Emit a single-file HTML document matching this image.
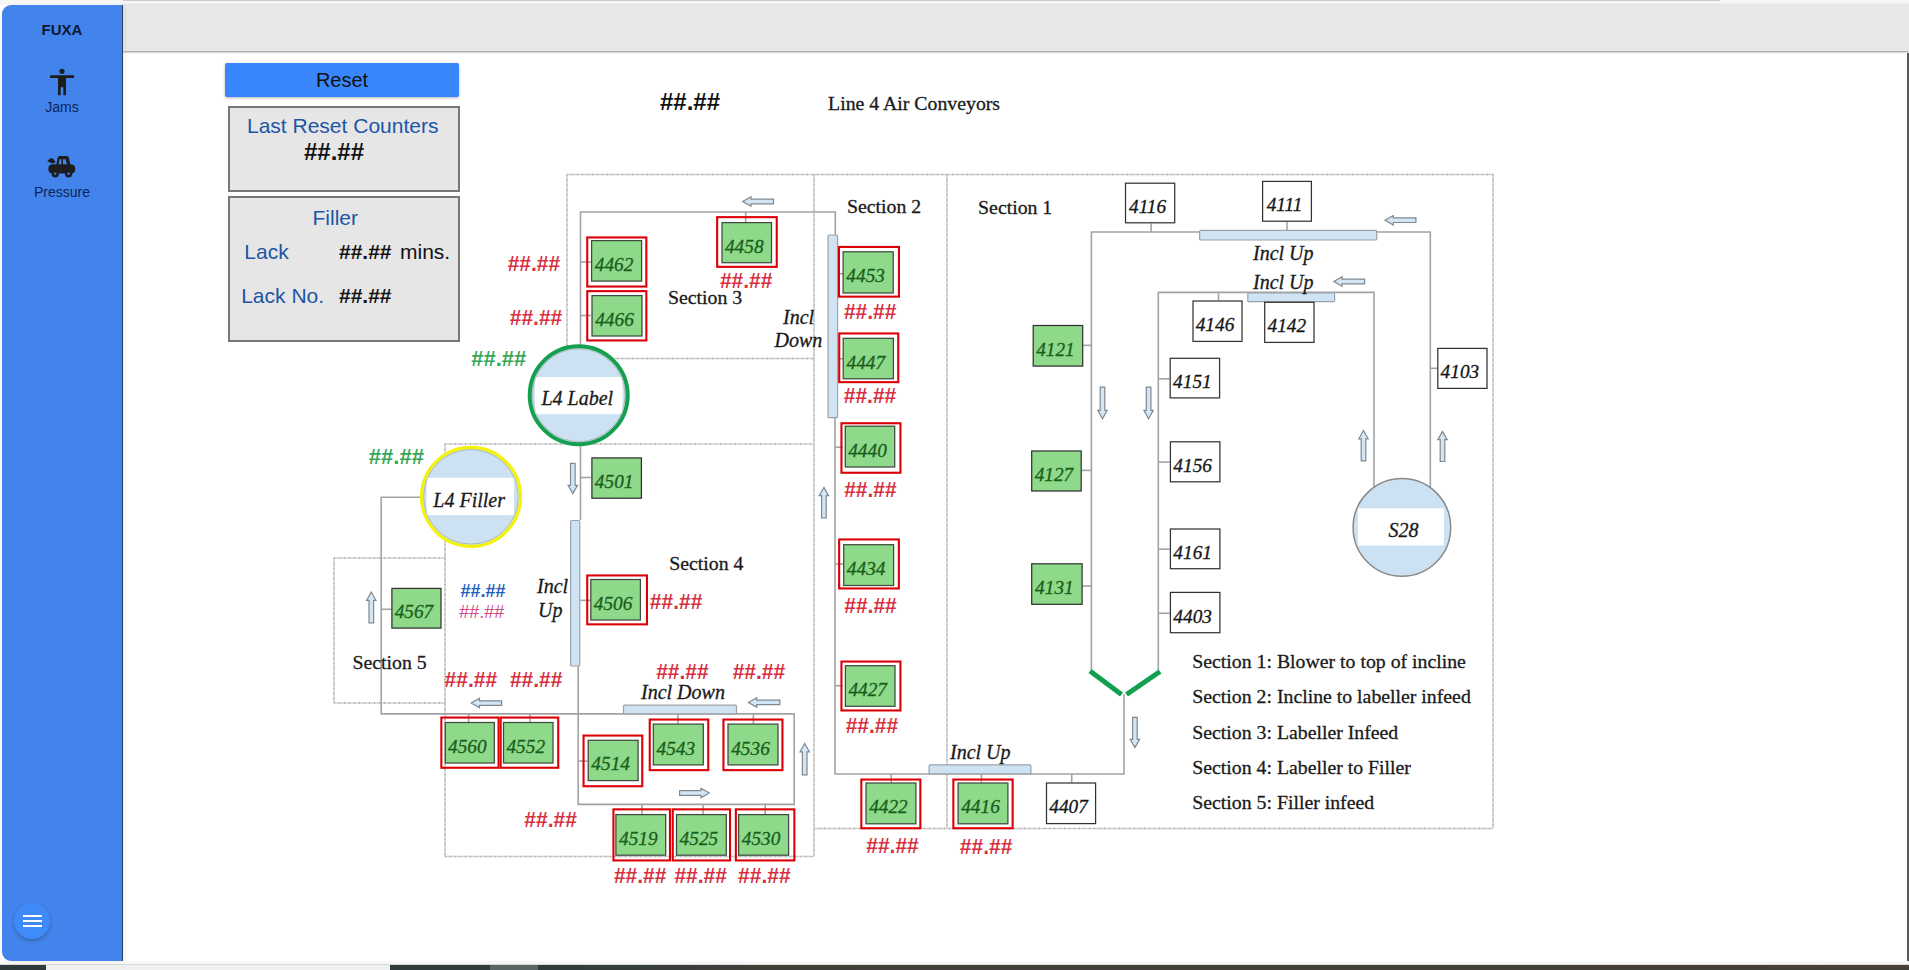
<!DOCTYPE html>
<html><head><meta charset="utf-8"><title>FUXA</title>
<style>
html,body{margin:0;padding:0;}
body{width:1909px;height:970px;position:relative;overflow:hidden;background:#ffffff;font-family:"Liberation Sans",sans-serif;}
.abs{position:absolute;}
#topstrip{left:0;top:0;width:1909px;height:5px;background:#f6f6f6;}
#topline{left:123px;top:0;width:1597px;height:1px;background:#c9c9c9;}
#header{left:123px;top:4px;width:1786px;height:47px;background:#e6e7e9;box-shadow:0 1px 2px rgba(0,0,0,0.45);}
#sidebar{left:2px;top:5px;width:120px;height:956px;background:#4384ec;border-radius:9px 0 0 9px;border-right:1px solid #2a3f66;box-shadow:2px 0 4px rgba(0,0,0,0.06);}
.navt{position:absolute;left:0;width:120px;text-align:center;color:#0c2459;}
#fuxa{color:#0d1a33;}
#fuxa{top:15px;font-weight:bold;font-size:15px;line-height:20px;}
.lbl{font-size:14px;line-height:16px;}
#fab{left:14px;top:903px;width:36px;height:36px;border-radius:50%;background:#3f8bf8;box-shadow:0 2px 4px rgba(0,0,0,0.25);}
#bottomstrip{left:0;top:961px;width:1909px;height:4px;background:#f7f7f7;border-bottom:1px solid #d9d9d9;box-sizing:border-box;}
#taskbar{left:0;top:965px;width:1909px;height:5px;background:linear-gradient(to right,#2f3c3c 0px,#2f3c3c 560px,#413f3a 760px,#454039 1909px);}
#rightedge{left:1907px;top:53px;width:2px;height:908px;background:#5a5a5a;}
#reset{left:225px;top:63px;width:234px;height:34px;background:#3a86fc;border-radius:2px;box-shadow:0 1px 3px rgba(0,0,0,0.3);text-align:center;font-size:20px;line-height:34px;color:#111;}
.panel{background:#e6e6e6;border:2px solid #777;box-sizing:border-box;}
#p1{left:228px;top:106px;width:232px;height:86px;}
#p2{left:228px;top:196px;width:232px;height:146px;}
.pt{position:absolute;font-size:21px;line-height:24px;color:#1d55a6;white-space:nowrap;}
.pv{position:absolute;font-size:21px;line-height:24px;color:#111;white-space:nowrap;}
.b{font-weight:bold;}
svg text.sr{font-family:"Liberation Serif",serif;font-size:19.8px;fill:#1a1a1a;stroke:#1a1a1a;stroke-width:0.3px;}
svg text.si{font-family:"Liberation Serif",serif;font-style:italic;font-size:20px;fill:#1a1a1a;stroke:#1a1a1a;stroke-width:0.3px;}
svg text.bg{font-family:"Liberation Serif",serif;font-style:italic;font-size:19.3px;fill:#185e1a;stroke:#185e1a;stroke-width:0.3px;}
svg text.bb{font-family:"Liberation Serif",serif;font-style:italic;font-size:19.3px;fill:#151515;stroke:#151515;stroke-width:0.3px;}
svg text.v{font-family:"Liberation Sans",sans-serif;font-weight:bold;}
svg text.vn{font-family:"Liberation Sans",sans-serif;}
</style></head><body>
<div id="topstrip" class="abs"></div>
<div id="topline" class="abs"></div>
<div id="header" class="abs"></div>
<div id="bottomstrip" class="abs"></div>
<div id="taskbar" class="abs"></div>
<div class="abs" style="left:0;top:965px;width:46px;height:5px;background:#2f3b3b"></div>
<div class="abs" style="left:46px;top:965px;width:344px;height:5px;background:#efefef"></div>
<div class="abs" style="left:390px;top:965px;width:100px;height:5px;background:#2f3c3c"></div>
<div class="abs" style="left:490px;top:965px;width:48px;height:5px;background:#5b6666"></div>
<div id="rightedge" class="abs"></div>
<div id="sidebar" class="abs">
  <div id="fuxa" class="navt">FUXA</div>
  <svg class="abs" style="left:44px;top:61px" width="32" height="32" viewBox="0 0 24 24"><path fill="#1d1d1d" d="M12 2c1.1 0 2 .9 2 2s-.9 2-2 2-2-.9-2-2 .9-2 2-2zm9 7h-6v13h-2v-6h-2v6H9V9H3V7h18v2z"/></svg>
  <div class="navt lbl" style="top:94px">Jams</div>
  <svg class="abs" style="left:0;top:0" width="120" height="200" viewBox="2 5 120 200"><g fill="#1d1d1d">
<path d="M56.2 165.2 L57.6 157.9 Q58 156 60 156 L66.6 156 Q68.6 156 69 157.9 L70.4 165.2 Z"/>
<path d="M52.5 164.3 L71 164.3 Q75.3 164.6 75.3 168.8 Q75.3 173.4 71 173.6 L53 173.6 Q48.3 173.4 48.3 168.9 Q48.3 164.6 52.5 164.3 Z"/>
<circle cx="55.2" cy="173.8" r="3.7"/><circle cx="68.6" cy="173.8" r="3.7"/>
<path d="M47.2 161.2 L50.2 158.2 L53.2 158.4 L55.6 162.6 L52.2 163.4 Z"/>
</g>
<path fill="#4384ec" d="M58.6 164.3 L59.6 159.3 L61.4 159.3 L61.4 164.3 Z M63 159.3 L65.6 159.3 L66.9 164.3 L63 164.3 Z"/>
<circle cx="55.2" cy="173.6" r="1.2" fill="#4384ec"/><circle cx="68.6" cy="173.6" r="1.2" fill="#4384ec"/></svg>
  <div class="navt lbl" style="top:179px">Pressure</div>
</div>
<div id="fab" class="abs"><div class="abs" style="left:8.5px;top:12px;width:19px;height:2px;background:#fff"></div><div class="abs" style="left:8.5px;top:17px;width:19px;height:2px;background:#fff"></div><div class="abs" style="left:8.5px;top:22px;width:19px;height:2px;background:#fff"></div></div>
<div id="reset" class="abs">Reset</div>
<div id="p1" class="abs panel">
  <div class="pt" style="left:17px;top:6px">Last Reset Counters</div>
  <div class="pv b" style="left:74px;top:31px;font-size:24px;line-height:26px">##.##</div>
</div>
<div id="p2" class="abs panel">
  <div class="pt" style="left:82.5px;top:7.5px">Filler</div>
  <div class="pt" style="left:14.3px;top:42px">Lack</div>
  <div class="pv b" style="left:109px;top:42px">##.##</div>
  <div class="pv" style="left:170px;top:42px">mins.</div>
  <div class="pt" style="left:11.2px;top:86px">Lack No.</div>
  <div class="pv b" style="left:109px;top:86px">##.##</div>
</div>
<div class="pv abs b" style="left:660px;top:89px;font-size:24px;line-height:26px">##.##</div>
<svg class="abs" style="left:0;top:0" width="1909" height="970" viewBox="0 0 1909 970">
<line x1="567" y1="174.5" x2="1493" y2="174.5" stroke="#d0d0d0" stroke-width="1.6" fill="none"/>
<line x1="567" y1="174.5" x2="1493" y2="174.5" stroke="#a8a8a8" stroke-width="1.4" stroke-dasharray="1 4" fill="none"/>
<line x1="567" y1="174.5" x2="567" y2="358.5" stroke="#d0d0d0" stroke-width="1.6" fill="none"/>
<line x1="567" y1="174.5" x2="567" y2="358.5" stroke="#a8a8a8" stroke-width="1.4" stroke-dasharray="1 4" fill="none"/>
<line x1="567" y1="358.5" x2="814" y2="358.5" stroke="#d0d0d0" stroke-width="1.6" fill="none"/>
<line x1="567" y1="358.5" x2="814" y2="358.5" stroke="#a8a8a8" stroke-width="1.4" stroke-dasharray="1 4" fill="none"/>
<line x1="814" y1="174.5" x2="814" y2="856.5" stroke="#d0d0d0" stroke-width="1.6" fill="none"/>
<line x1="814" y1="174.5" x2="814" y2="856.5" stroke="#a8a8a8" stroke-width="1.4" stroke-dasharray="1 4" fill="none"/>
<line x1="947" y1="174.5" x2="947" y2="828.5" stroke="#d0d0d0" stroke-width="1.6" fill="none"/>
<line x1="947" y1="174.5" x2="947" y2="828.5" stroke="#a8a8a8" stroke-width="1.4" stroke-dasharray="1 4" fill="none"/>
<line x1="1493" y1="174.5" x2="1493" y2="828.5" stroke="#d0d0d0" stroke-width="1.6" fill="none"/>
<line x1="1493" y1="174.5" x2="1493" y2="828.5" stroke="#a8a8a8" stroke-width="1.4" stroke-dasharray="1 4" fill="none"/>
<line x1="814" y1="828.5" x2="1493" y2="828.5" stroke="#d0d0d0" stroke-width="1.6" fill="none"/>
<line x1="814" y1="828.5" x2="1493" y2="828.5" stroke="#a8a8a8" stroke-width="1.4" stroke-dasharray="1 4" fill="none"/>
<line x1="445" y1="444" x2="814" y2="444" stroke="#d0d0d0" stroke-width="1.6" fill="none"/>
<line x1="445" y1="444" x2="814" y2="444" stroke="#a8a8a8" stroke-width="1.4" stroke-dasharray="1 4" fill="none"/>
<line x1="445" y1="444" x2="445" y2="856.5" stroke="#d0d0d0" stroke-width="1.6" fill="none"/>
<line x1="445" y1="444" x2="445" y2="856.5" stroke="#a8a8a8" stroke-width="1.4" stroke-dasharray="1 4" fill="none"/>
<line x1="445" y1="856.5" x2="814" y2="856.5" stroke="#d0d0d0" stroke-width="1.6" fill="none"/>
<line x1="445" y1="856.5" x2="814" y2="856.5" stroke="#a8a8a8" stroke-width="1.4" stroke-dasharray="1 4" fill="none"/>
<line x1="334" y1="558" x2="445" y2="558" stroke="#d0d0d0" stroke-width="1.6" fill="none"/>
<line x1="334" y1="558" x2="445" y2="558" stroke="#a8a8a8" stroke-width="1.4" stroke-dasharray="1 4" fill="none"/>
<line x1="334" y1="558" x2="334" y2="703" stroke="#d0d0d0" stroke-width="1.6" fill="none"/>
<line x1="334" y1="558" x2="334" y2="703" stroke="#a8a8a8" stroke-width="1.4" stroke-dasharray="1 4" fill="none"/>
<line x1="334" y1="703" x2="445" y2="703" stroke="#d0d0d0" stroke-width="1.6" fill="none"/>
<line x1="334" y1="703" x2="445" y2="703" stroke="#a8a8a8" stroke-width="1.4" stroke-dasharray="1 4" fill="none"/>
<polyline points="580.5,520 580.5,212 835.3,212 835.3,236" stroke="#a3a3a3" stroke-width="1.6" fill="none"/>
<polyline points="580.5,262 591,262" stroke="#a3a3a3" stroke-width="1.6" fill="none"/>
<polyline points="580.5,315.5 591,315.5" stroke="#a3a3a3" stroke-width="1.6" fill="none"/>
<polyline points="580.5,477.5 591,477.5" stroke="#a3a3a3" stroke-width="1.6" fill="none"/>
<polyline points="580.5,600.4 591,600.4" stroke="#a3a3a3" stroke-width="1.6" fill="none"/>
<polyline points="745.7,212 745.7,222" stroke="#a3a3a3" stroke-width="1.6" fill="none"/>
<polyline points="835,417 835,774 1124,774 1124,694" stroke="#a3a3a3" stroke-width="1.6" fill="none"/>
<polyline points="835,273.7 843,273.7" stroke="#a3a3a3" stroke-width="1.6" fill="none"/>
<polyline points="835,358.8 843,358.8" stroke="#a3a3a3" stroke-width="1.6" fill="none"/>
<polyline points="835,447.2 843,447.2" stroke="#a3a3a3" stroke-width="1.6" fill="none"/>
<polyline points="835,563.9 843,563.9" stroke="#a3a3a3" stroke-width="1.6" fill="none"/>
<polyline points="835,685.7 843,685.7" stroke="#a3a3a3" stroke-width="1.6" fill="none"/>
<polyline points="891.2,774 891.2,782.4" stroke="#a3a3a3" stroke-width="1.6" fill="none"/>
<polyline points="981.4,774 981.4,782.4" stroke="#a3a3a3" stroke-width="1.6" fill="none"/>
<polyline points="1071.7,774 1071.7,782.4" stroke="#a3a3a3" stroke-width="1.6" fill="none"/>
<polyline points="1091.4,670 1091.4,232 1430.3,232 1430.3,487" stroke="#a3a3a3" stroke-width="1.6" fill="none"/>
<polyline points="1151.1,223.4 1151.1,232" stroke="#a3a3a3" stroke-width="1.6" fill="none"/>
<polyline points="1287,221.8 1287,232" stroke="#a3a3a3" stroke-width="1.6" fill="none"/>
<polyline points="1083.3,345.4 1091.4,345.4" stroke="#a3a3a3" stroke-width="1.6" fill="none"/>
<polyline points="1081.8,470.4 1091.4,470.4" stroke="#a3a3a3" stroke-width="1.6" fill="none"/>
<polyline points="1082.7,586 1091.4,586" stroke="#a3a3a3" stroke-width="1.6" fill="none"/>
<polyline points="1430.3,368.3 1437.2,368.3" stroke="#a3a3a3" stroke-width="1.6" fill="none"/>
<polyline points="1158.3,670 1158.3,292.4 1374,292.4 1374,487" stroke="#a3a3a3" stroke-width="1.6" fill="none"/>
<polyline points="1218.5,292.4 1218.5,300.4" stroke="#a3a3a3" stroke-width="1.6" fill="none"/>
<polyline points="1158.3,378.8 1169.7,378.8" stroke="#a3a3a3" stroke-width="1.6" fill="none"/>
<polyline points="1158.3,462.1 1169.7,462.1" stroke="#a3a3a3" stroke-width="1.6" fill="none"/>
<polyline points="1158.3,549.2 1169.7,549.2" stroke="#a3a3a3" stroke-width="1.6" fill="none"/>
<polyline points="1158.3,613.3 1169.7,613.3" stroke="#a3a3a3" stroke-width="1.6" fill="none"/>
<polyline points="420,497.2 381.2,497.2 381.2,713.9 794.2,713.9 794.2,804.4 578.2,804.4 578.2,666" stroke="#a3a3a3" stroke-width="1.6" fill="none"/>
<polyline points="381.2,609.3 391.3,609.3" stroke="#a3a3a3" stroke-width="1.6" fill="none"/>
<polyline points="468.6,713.9 468.6,722" stroke="#a3a3a3" stroke-width="1.6" fill="none"/>
<polyline points="530,713.9 530,722" stroke="#a3a3a3" stroke-width="1.6" fill="none"/>
<polyline points="677.9,713.9 677.9,723.5" stroke="#a3a3a3" stroke-width="1.6" fill="none"/>
<polyline points="753.4,713.9 753.4,723.5" stroke="#a3a3a3" stroke-width="1.6" fill="none"/>
<polyline points="578.2,761.1 587.6,761.1" stroke="#a3a3a3" stroke-width="1.6" fill="none"/>
<polyline points="642,804.4 642,814" stroke="#a3a3a3" stroke-width="1.6" fill="none"/>
<polyline points="703.1,804.4 703.1,814" stroke="#a3a3a3" stroke-width="1.6" fill="none"/>
<polyline points="765.2,804.4 765.2,814" stroke="#a3a3a3" stroke-width="1.6" fill="none"/>
<polyline points="1090,671 1121.5,694.5" stroke="#10a050" stroke-width="5" fill="none"/>
<polyline points="1126.5,694.5 1160,671.5" stroke="#10a050" stroke-width="5" fill="none"/>
<rect x="828" y="235" width="9.6" height="182.7" rx="1" fill="#cfe3f2" stroke="#9aa3ab" stroke-width="1.2"/>
<rect x="570.6" y="520.5" width="9.2" height="145.5" rx="1" fill="#cfe3f2" stroke="#9aa3ab" stroke-width="1.2"/>
<rect x="623.5" y="705.2" width="113" height="8.6" rx="1" fill="#cfe3f2" stroke="#9aa3ab" stroke-width="1.2"/>
<rect x="929.1" y="764.9" width="101.8" height="9" rx="1" fill="#cfe3f2" stroke="#9aa3ab" stroke-width="1.2"/>
<rect x="1199.6" y="230.4" width="177.1" height="9.6" rx="1" fill="#cfe3f2" stroke="#9aa3ab" stroke-width="1.2"/>
<rect x="1247.8" y="293" width="86.8" height="8.7" rx="1" fill="#cfe3f2" stroke="#9aa3ab" stroke-width="1.2"/>
<polygon points="742.7,201.5 751,196.8 751,199.2 773.5,199.2 773.5,203.8 751,203.8 751,206.2" fill="#d2e6f5" stroke="#7f878f" stroke-width="1.2"/>
<polygon points="1385,220.2 1393.3,215.5 1393.3,217.9 1415.9,217.9 1415.9,222.5 1393.3,222.5 1393.3,224.9" fill="#d2e6f5" stroke="#7f878f" stroke-width="1.2"/>
<polygon points="1333.8,281.5 1342.1,276.8 1342.1,279.2 1364.6,279.2 1364.6,283.8 1342.1,283.8 1342.1,286.2" fill="#d2e6f5" stroke="#7f878f" stroke-width="1.2"/>
<polygon points="471.2,703.1 479.5,698.4 479.5,700.8 501.6,700.8 501.6,705.4 479.5,705.4 479.5,707.8" fill="#d2e6f5" stroke="#7f878f" stroke-width="1.2"/>
<polygon points="748.4,702.4 756.7,697.7 756.7,700.1 779.8,700.1 779.8,704.7 756.7,704.7 756.7,707.1" fill="#d2e6f5" stroke="#7f878f" stroke-width="1.2"/>
<polygon points="709.3,793 701,788.3 701,790.7 679.6,790.7 679.6,795.3 701,795.3 701,797.7" fill="#d2e6f5" stroke="#7f878f" stroke-width="1.2"/>
<polygon points="572.8,493.6 577.5,485.3 575.1,485.3 575.1,463.3 570.5,463.3 570.5,485.3 568.1,485.3" fill="#d2e6f5" stroke="#7f878f" stroke-width="1.2"/>
<polygon points="1102.5,418.7 1107.2,410.4 1104.8,410.4 1104.8,387.2 1100.2,387.2 1100.2,410.4 1097.8,410.4" fill="#d2e6f5" stroke="#7f878f" stroke-width="1.2"/>
<polygon points="1148.6,418.7 1153.3,410.4 1150.9,410.4 1150.9,387.2 1146.3,387.2 1146.3,410.4 1143.9,410.4" fill="#d2e6f5" stroke="#7f878f" stroke-width="1.2"/>
<polygon points="1134.9,747.6 1139.6,739.3 1137.2,739.3 1137.2,717.4 1132.6,717.4 1132.6,739.3 1130.2,739.3" fill="#d2e6f5" stroke="#7f878f" stroke-width="1.2"/>
<polygon points="371.3,592 376,600.3 373.6,600.3 373.6,622.8 369,622.8 369,600.3 366.6,600.3" fill="#d2e6f5" stroke="#7f878f" stroke-width="1.2"/>
<polygon points="823.9,487.4 828.6,495.7 826.2,495.7 826.2,518 821.6,518 821.6,495.7 819.2,495.7" fill="#d2e6f5" stroke="#7f878f" stroke-width="1.2"/>
<polygon points="804.7,743.5 809.4,751.8 807,751.8 807,774.9 802.4,774.9 802.4,751.8 800,751.8" fill="#d2e6f5" stroke="#7f878f" stroke-width="1.2"/>
<polygon points="1363.5,430.5 1368.2,438.8 1365.8,438.8 1365.8,460.9 1361.2,460.9 1361.2,438.8 1358.8,438.8" fill="#d2e6f5" stroke="#7f878f" stroke-width="1.2"/>
<polygon points="1442.5,431.4 1447.2,439.7 1444.8,439.7 1444.8,461.5 1440.2,461.5 1440.2,439.7 1437.8,439.7" fill="#d2e6f5" stroke="#7f878f" stroke-width="1.2"/>
<clipPath id="c578"><circle cx="578.7" cy="395.2" r="49"/></clipPath>
<circle cx="578.7" cy="395.2" r="49" fill="#cce2f3"/>
<rect x="534.9" y="377" width="87.7" height="37.2" fill="#ffffff" clip-path="url(#c578)"/>
<circle cx="578.7" cy="395.2" r="46.4" fill="none" stroke="#8a8f80" stroke-width="0.7" opacity="0.7"/>
<circle cx="578.7" cy="395.2" r="49" fill="none" stroke="#14a050" stroke-width="4"/>
<text x="541.5" y="404.7" class="si">L4 Label</text>
<clipPath id="c471"><circle cx="471" cy="496.8" r="49.5"/></clipPath>
<circle cx="471" cy="496.8" r="49.5" fill="#cce2f3"/>
<rect x="426.6" y="477.8" width="87.3" height="37.4" fill="#ffffff" clip-path="url(#c471)"/>
<circle cx="471" cy="496.8" r="47.3" fill="none" stroke="#8a8f80" stroke-width="0.7" opacity="0.7"/>
<circle cx="471" cy="496.8" r="49.5" fill="none" stroke="#f2f20c" stroke-width="3.2"/>
<text x="433.3" y="507" class="si">L4 Filler</text>
<clipPath id="c1401"><circle cx="1401.9" cy="527.4" r="48.8"/></clipPath>
<circle cx="1401.9" cy="527.4" r="48.8" fill="#cce2f3"/>
<rect x="1357.9" y="508.3" width="86" height="37.2" fill="#ffffff" clip-path="url(#c1401)"/>
<circle cx="1401.9" cy="527.4" r="48.8" fill="none" stroke="#8a8a8a" stroke-width="1.5"/>
<text x="1388.5" y="537.2" class="si">S28</text>
<rect x="591.6" y="240.6" width="50" height="40.5" fill="#8ed98a" stroke="#3f4a40" stroke-width="1.25"/>
<text x="614.1" y="270.85" text-anchor="middle" class="bg">4462</text>
<rect x="587.25" y="237.45" width="59.1" height="49.1" fill="none" stroke="#dc0006" stroke-width="2.1"/>
<rect x="592" y="295.6" width="50" height="40.4" fill="#8ed98a" stroke="#3f4a40" stroke-width="1.25"/>
<text x="614.5" y="325.8" text-anchor="middle" class="bg">4466</text>
<rect x="587.25" y="291.15" width="59.1" height="49.3" fill="none" stroke="#dc0006" stroke-width="2.1"/>
<rect x="722" y="222.6" width="49.5" height="40.1" fill="#8ed98a" stroke="#3f4a40" stroke-width="1.25"/>
<text x="744.25" y="252.65" text-anchor="middle" class="bg">4458</text>
<rect x="717.15" y="217.15" width="59.6" height="49.7" fill="none" stroke="#dc0006" stroke-width="2.1"/>
<rect x="843.1" y="251.8" width="50.1" height="41.2" fill="#8ed98a" stroke="#3f4a40" stroke-width="1.25"/>
<text x="865.65" y="282.4" text-anchor="middle" class="bg">4453</text>
<rect x="838.95" y="246.95" width="60" height="49.7" fill="none" stroke="#dc0006" stroke-width="2.1"/>
<rect x="843.2" y="338.3" width="50.2" height="40.5" fill="#8ed98a" stroke="#3f4a40" stroke-width="1.25"/>
<text x="865.8" y="368.55" text-anchor="middle" class="bg">4447</text>
<rect x="839.25" y="333.45" width="59" height="48.7" fill="none" stroke="#dc0006" stroke-width="2.1"/>
<rect x="845.3" y="426.2" width="49.4" height="40.8" fill="#8ed98a" stroke="#3f4a40" stroke-width="1.25"/>
<text x="867.5" y="456.6" text-anchor="middle" class="bg">4440</text>
<rect x="841.45" y="423.25" width="59" height="49.5" fill="none" stroke="#dc0006" stroke-width="2.1"/>
<rect x="843.7" y="544.7" width="49.9" height="40.8" fill="#8ed98a" stroke="#3f4a40" stroke-width="1.25"/>
<text x="866.15" y="575.1" text-anchor="middle" class="bg">4434</text>
<rect x="839.15" y="539.45" width="59.7" height="49" fill="none" stroke="#dc0006" stroke-width="2.1"/>
<rect x="845.4" y="665.7" width="49.6" height="40.6" fill="#8ed98a" stroke="#3f4a40" stroke-width="1.25"/>
<text x="867.7" y="696" text-anchor="middle" class="bg">4427</text>
<rect x="841.45" y="661.55" width="59" height="48.9" fill="none" stroke="#dc0006" stroke-width="2.1"/>
<rect x="866" y="783" width="49.9" height="40.8" fill="#8ed98a" stroke="#3f4a40" stroke-width="1.25"/>
<text x="888.45" y="813.4" text-anchor="middle" class="bg">4422</text>
<rect x="861.35" y="779.55" width="59" height="48.7" fill="none" stroke="#dc0006" stroke-width="2.1"/>
<rect x="958.1" y="783" width="49.8" height="40.8" fill="#8ed98a" stroke="#3f4a40" stroke-width="1.25"/>
<text x="980.5" y="813.4" text-anchor="middle" class="bg">4416</text>
<rect x="953.35" y="779.55" width="59.3" height="48.7" fill="none" stroke="#dc0006" stroke-width="2.1"/>
<rect x="590.8" y="579.5" width="49.6" height="40.5" fill="#8ed98a" stroke="#3f4a40" stroke-width="1.25"/>
<text x="613.1" y="609.75" text-anchor="middle" class="bg">4506</text>
<rect x="587.25" y="575.45" width="59.7" height="48.9" fill="none" stroke="#dc0006" stroke-width="2.1"/>
<rect x="445.3" y="722.5" width="49" height="40.5" fill="#8ed98a" stroke="#3f4a40" stroke-width="1.25"/>
<text x="467.3" y="752.75" text-anchor="middle" class="bg">4560</text>
<rect x="441.35" y="717.55" width="57.2" height="50.2" fill="none" stroke="#dc0006" stroke-width="2.1"/>
<rect x="503.5" y="722.5" width="49.5" height="40.5" fill="#8ed98a" stroke="#3f4a40" stroke-width="1.25"/>
<text x="525.75" y="752.75" text-anchor="middle" class="bg">4552</text>
<rect x="500.65" y="717.55" width="57.6" height="50.2" fill="none" stroke="#dc0006" stroke-width="2.1"/>
<rect x="588.2" y="740.3" width="49.9" height="40.3" fill="#8ed98a" stroke="#3f4a40" stroke-width="1.25"/>
<text x="610.65" y="770.45" text-anchor="middle" class="bg">4514</text>
<rect x="583.55" y="735.55" width="58.7" height="50.7" fill="none" stroke="#dc0006" stroke-width="2.1"/>
<rect x="653.3" y="724.1" width="50" height="40.8" fill="#8ed98a" stroke="#3f4a40" stroke-width="1.25"/>
<text x="675.8" y="754.5" text-anchor="middle" class="bg">4543</text>
<rect x="649.75" y="719.55" width="58.5" height="50.6" fill="none" stroke="#dc0006" stroke-width="2.1"/>
<rect x="728" y="724.1" width="50" height="40.8" fill="#8ed98a" stroke="#3f4a40" stroke-width="1.25"/>
<text x="750.5" y="754.5" text-anchor="middle" class="bg">4536</text>
<rect x="723.45" y="719.55" width="59" height="50.6" fill="none" stroke="#dc0006" stroke-width="2.1"/>
<rect x="615.9" y="814.6" width="49.8" height="40.6" fill="#8ed98a" stroke="#3f4a40" stroke-width="1.25"/>
<text x="638.3" y="844.9" text-anchor="middle" class="bg">4519</text>
<rect x="613.45" y="809.35" width="56.5" height="51.1" fill="none" stroke="#dc0006" stroke-width="2.1"/>
<rect x="676.5" y="814.6" width="49.8" height="40.6" fill="#8ed98a" stroke="#3f4a40" stroke-width="1.25"/>
<text x="698.9" y="844.9" text-anchor="middle" class="bg">4525</text>
<rect x="672.75" y="809.35" width="57.3" height="51.1" fill="none" stroke="#dc0006" stroke-width="2.1"/>
<rect x="738.6" y="814.6" width="50" height="40.6" fill="#8ed98a" stroke="#3f4a40" stroke-width="1.25"/>
<text x="761.1" y="844.9" text-anchor="middle" class="bg">4530</text>
<rect x="735.85" y="809.35" width="58.5" height="51.1" fill="none" stroke="#dc0006" stroke-width="2.1"/>
<rect x="591.9" y="457.9" width="49.5" height="40.3" fill="#8ed98a" stroke="#333" stroke-width="1.25"/>
<text x="614.15" y="488.05" text-anchor="middle" class="bg">4501</text>
<rect x="391.9" y="588.4" width="49.1" height="39.7" fill="#8ed98a" stroke="#333" stroke-width="1.25"/>
<text x="413.95" y="618.25" text-anchor="middle" class="bg">4567</text>
<rect x="1033.2" y="325.5" width="49.5" height="40.6" fill="#8ed98a" stroke="#333" stroke-width="1.25"/>
<text x="1055.45" y="355.8" text-anchor="middle" class="bg">4121</text>
<rect x="1031.7" y="451" width="49.5" height="40" fill="#8ed98a" stroke="#333" stroke-width="1.25"/>
<text x="1053.95" y="481" text-anchor="middle" class="bg">4127</text>
<rect x="1031.7" y="563.8" width="50.4" height="40.5" fill="#8ed98a" stroke="#333" stroke-width="1.25"/>
<text x="1054.4" y="594.05" text-anchor="middle" class="bg">4131</text>
<rect x="1125.5" y="183.2" width="49.2" height="39.6" fill="#ffffff" stroke="#333" stroke-width="1.25"/>
<text x="1147.6" y="213" text-anchor="middle" class="bb">4116</text>
<rect x="1262.6" y="181.4" width="48.8" height="39.8" fill="#ffffff" stroke="#333" stroke-width="1.25"/>
<text x="1284.5" y="211.3" text-anchor="middle" class="bb">4111</text>
<rect x="1193" y="301" width="49" height="40.4" fill="#ffffff" stroke="#333" stroke-width="1.25"/>
<text x="1215" y="331.2" text-anchor="middle" class="bb">4146</text>
<rect x="1264.7" y="302.3" width="49.3" height="40.1" fill="#ffffff" stroke="#333" stroke-width="1.25"/>
<text x="1286.85" y="332.35" text-anchor="middle" class="bb">4142</text>
<rect x="1170.2" y="358.3" width="49.4" height="39.6" fill="#ffffff" stroke="#333" stroke-width="1.25"/>
<text x="1192.4" y="388.1" text-anchor="middle" class="bb">4151</text>
<rect x="1170.4" y="441.8" width="49.5" height="40" fill="#ffffff" stroke="#333" stroke-width="1.25"/>
<text x="1192.65" y="471.8" text-anchor="middle" class="bb">4156</text>
<rect x="1170.4" y="529" width="49.5" height="39.7" fill="#ffffff" stroke="#333" stroke-width="1.25"/>
<text x="1192.65" y="558.85" text-anchor="middle" class="bb">4161</text>
<rect x="1170.4" y="592.4" width="49.5" height="40.3" fill="#ffffff" stroke="#333" stroke-width="1.25"/>
<text x="1192.65" y="622.55" text-anchor="middle" class="bb">4403</text>
<rect x="1437.8" y="348.4" width="49.2" height="40" fill="#ffffff" stroke="#333" stroke-width="1.25"/>
<text x="1459.9" y="378.4" text-anchor="middle" class="bb">4103</text>
<rect x="1046.5" y="783" width="49.1" height="40.6" fill="#ffffff" stroke="#333" stroke-width="1.25"/>
<text x="1068.55" y="813.3" text-anchor="middle" class="bb">4407</text>
<text x="828.1" y="109.8" class="sr">Line 4 Air Conveyors</text>
<text x="668" y="303.5" class="sr">Section 3</text>
<text x="847" y="212.7" class="sr">Section 2</text>
<text x="978.1" y="214.3" class="sr">Section 1</text>
<text x="669.3" y="569.8" class="sr">Section 4</text>
<text x="352.5" y="668.9" class="sr">Section 5</text>
<text x="1192.3" y="668.1" class="sr">Section 1: Blower to top of incline</text>
<text x="1192.3" y="703.2" class="sr">Section 2: Incline to labeller infeed</text>
<text x="1192.3" y="738.7" class="sr">Section 3: Labeller Infeed</text>
<text x="1192.3" y="773.7" class="sr">Section 4: Labeller to Filler</text>
<text x="1192.3" y="809.4" class="sr">Section 5: Filler infeed</text>
<text x="783" y="323.6" class="si">Incl</text>
<text x="774.5" y="346.7" class="si">Down</text>
<text x="537" y="592.9" class="si">Incl</text>
<text x="538" y="616.5" class="si">Up</text>
<text x="641" y="699.4" class="si">Incl Down</text>
<text x="950" y="759.4" class="si">Incl Up</text>
<text x="1253" y="260.4" class="si">Incl Up</text>
<text x="1253" y="289.3" class="si">Incl Up</text>
<text transform="translate(533.9,263.2) scale(1,1.06)" x="0" y="7.56" text-anchor="middle" class="v" fill="#d63042" style="font-size:21px">##.##</text>
<text transform="translate(536,316.5) scale(1,1.06)" x="0" y="7.56" text-anchor="middle" class="v" fill="#d63042" style="font-size:21px">##.##</text>
<text transform="translate(746.2,279.5) scale(1,1.06)" x="0" y="7.56" text-anchor="middle" class="v" fill="#d63042" style="font-size:21px">##.##</text>
<text transform="translate(870.2,311.1) scale(1,1.06)" x="0" y="7.56" text-anchor="middle" class="v" fill="#d63042" style="font-size:21px">##.##</text>
<text transform="translate(870,394.8) scale(1,1.06)" x="0" y="7.56" text-anchor="middle" class="v" fill="#d63042" style="font-size:21px">##.##</text>
<text transform="translate(870.4,489.4) scale(1,1.06)" x="0" y="7.56" text-anchor="middle" class="v" fill="#d63042" style="font-size:21px">##.##</text>
<text transform="translate(870.5,604.7) scale(1,1.06)" x="0" y="7.56" text-anchor="middle" class="v" fill="#d63042" style="font-size:21px">##.##</text>
<text transform="translate(871.9,725) scale(1,1.06)" x="0" y="7.56" text-anchor="middle" class="v" fill="#d63042" style="font-size:21px">##.##</text>
<text transform="translate(892.5,844.9) scale(1,1.06)" x="0" y="7.56" text-anchor="middle" class="v" fill="#d63042" style="font-size:21px">##.##</text>
<text transform="translate(986.1,846.2) scale(1,1.06)" x="0" y="7.56" text-anchor="middle" class="v" fill="#d63042" style="font-size:21px">##.##</text>
<text transform="translate(676.1,600.8) scale(1,1.06)" x="0" y="7.56" text-anchor="middle" class="v" fill="#d63042" style="font-size:21px">##.##</text>
<text transform="translate(470.8,679.3) scale(1,1.06)" x="0" y="7.56" text-anchor="middle" class="v" fill="#d63042" style="font-size:21px">##.##</text>
<text transform="translate(536.2,679.3) scale(1,1.06)" x="0" y="7.56" text-anchor="middle" class="v" fill="#d63042" style="font-size:21px">##.##</text>
<text transform="translate(682.4,671.1) scale(1,1.06)" x="0" y="7.56" text-anchor="middle" class="v" fill="#d63042" style="font-size:21px">##.##</text>
<text transform="translate(758.9,671.1) scale(1,1.06)" x="0" y="7.56" text-anchor="middle" class="v" fill="#d63042" style="font-size:21px">##.##</text>
<text transform="translate(550.6,819.1) scale(1,1.06)" x="0" y="7.56" text-anchor="middle" class="v" fill="#d63042" style="font-size:21px">##.##</text>
<text transform="translate(640.2,875.1) scale(1,1.06)" x="0" y="7.56" text-anchor="middle" class="v" fill="#d63042" style="font-size:21px">##.##</text>
<text transform="translate(700.7,875.1) scale(1,1.06)" x="0" y="7.56" text-anchor="middle" class="v" fill="#d63042" style="font-size:21px">##.##</text>
<text transform="translate(764.3,875.1) scale(1,1.06)" x="0" y="7.56" text-anchor="middle" class="v" fill="#d63042" style="font-size:21px">##.##</text>
<text transform="translate(498.7,358.5) scale(1,1.0)" x="0" y="7.92" text-anchor="middle" class="v" fill="#36a657" style="font-size:22px">##.##</text>
<text transform="translate(396.4,456.3) scale(1,1.0)" x="0" y="7.92" text-anchor="middle" class="v" fill="#36a657" style="font-size:22px">##.##</text>
<text transform="translate(483.1,591) scale(1,1.0)" x="0" y="6.48" text-anchor="middle" class="v" fill="#1f5fc0" style="font-size:18px">##.##</text>
<text transform="translate(481.7,611.9) scale(1,1.0)" x="0" y="6.48" text-anchor="middle" class="vn" fill="#cc4a88" style="font-size:18px">##.##</text>
</svg>
</body></html>
